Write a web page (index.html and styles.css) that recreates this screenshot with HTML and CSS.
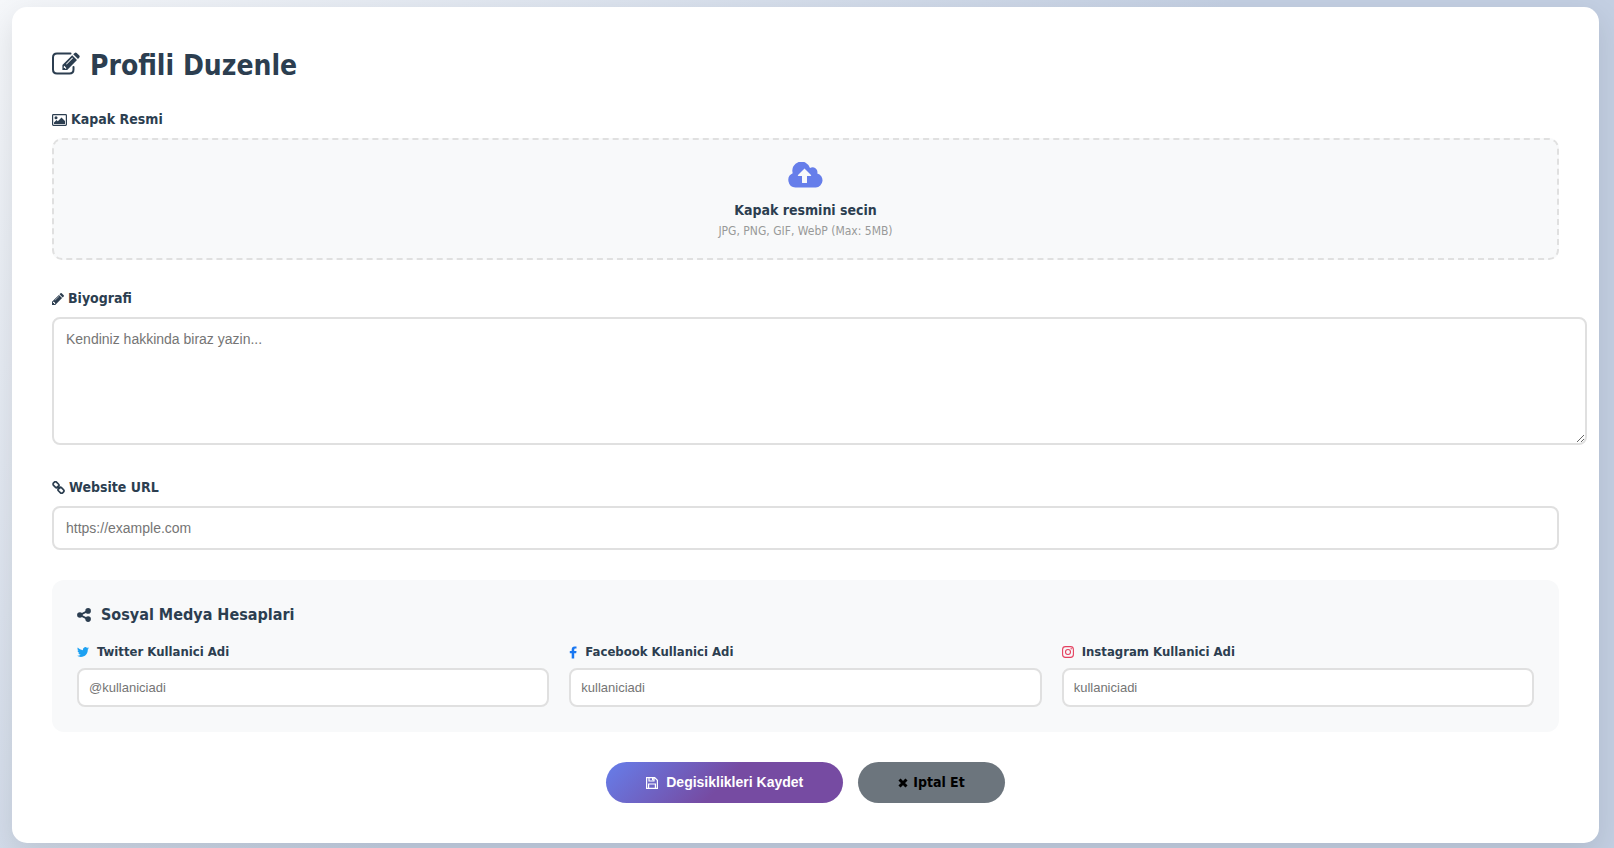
FILE: index.html
```html
<!DOCTYPE html>
<html lang="tr">
    <head>
        <meta charset="UTF-8" />
        <meta name="viewport" content="width=device-width, initial-scale=1.0" />
        <title>Profili Duzenle</title>

        <link rel="stylesheet" href="styles.css">
    </head>
    <body>
        <main class="edit-card">
            <h1>
                <svg class="icon-title" viewBox="0 0 28 28" aria-hidden="true">
                    <path d="M18.500 1.500H5Q1 1.500 1 5.500V17.500Q1 21.500 5 21.500H17.500Q21.500 21.500 21.500 17.500V15" fill="none" stroke="currentColor" stroke-width="2" stroke-linecap="round" />
                    <path fill="currentColor" fill-rule="evenodd" d="M20.200 3.200L25 8L15.200 17.900H10.400V13zM12.400 13.800L11.800 14.400V15.900H13.200V17H13.600L14.400 16.200zM20.300 5.600L14 11.900L14.600 12.500L20.900 6.200zM21.200 2.200L22.700 .9Q23.700 .1 24.700 .9L27.300 3.500Q28.100 4.500 27.300 5.500L26 7z" />
                </svg>
                Profili Duzenle
            </h1>

            <form action="javascript:void(0)">
                <div class="form-group">
                    <label for="cover">
                        <svg class="icon-image" viewBox="0 0 15 12" aria-hidden="true">
                            <rect x=".6" y=".6" width="13.800" height="10.800" rx=".8" fill="none" stroke="currentColor" stroke-width="1.200" />
                            <circle cx="4" cy="3.700" r="1.500" fill="currentColor" />
                            <path d="M2 10V8.500L4.500 6L5.800 7.200L9.500 3.400L13 7V10z" fill="currentColor" />
                        </svg>
                        Kapak Resmi
                    </label>
                    <label class="upload-area" for="cover">
                        <svg class="icon-cloud" viewBox="0 0 35 26" aria-hidden="true">
                            <path fill="currentColor" fill-rule="evenodd" d="M7.500 25.500A7.500 7.500 0 0 1 4.700 11.200A9 9 0 0 1 22 6A4.900 4.900 0 0 1 29.300 11.400A7.200 7.200 0 0 1 27.800 25.500zM16.500 6.600L10 13.100Q9.500 13.900 10.400 13.900H14V20.400Q14 21 14.600 21H18.400Q19 21 19 20.400V13.900H22.600Q23.500 13.900 23 13.100z" />
                        </svg>
                        <span class="upload-text">Kapak resmini secin</span>
                        <span class="upload-hint">JPG, PNG, GIF, WebP (Max: 5MB)</span>
                    </label>
                    <input type="file" id="cover" accept="image/*" />
                </div>

                <div class="form-group">
                    <label for="bio">
                        <svg class="icon-pencil" viewBox="0 0 12 12" aria-hidden="true">
                            <path fill="currentColor" fill-rule="evenodd" d="M0 12V8.800L6.900 1.900L10.100 5.100L3.200 12zM1 9.300V10H2V11H2.700L3.400 10.300L1.700 8.600zM6.800 3.200L2.700 7.300L3 7.600L7.100 3.500zM7.500 1.300L8.500 .3Q9.100-.2 9.700 .3L11.700 2.300Q12.200 2.900 11.700 3.500L10.700 4.500z" />
                        </svg>
                        Biyografi
                    </label>
                    <textarea id="bio" placeholder="Kendiniz hakkinda biraz yazin..."></textarea>
                </div>

                <div class="form-group">
                    <label for="website">
                        <svg class="icon-link" viewBox="0 0 13 13" aria-hidden="true">
                            <g fill="none" stroke="currentColor" stroke-width="1.700">
                                <rect x="1" y="1.500" width="6" height="4.400" rx="1.800" transform="rotate(45 4 3.700)" />
                                <rect x="6" y="7.100" width="6" height="4.400" rx="1.800" transform="rotate(45 9 9.300)" />
                                <path d="M5 5L8 8" />
                            </g>
                        </svg>
                        Website URL
                    </label>
                    <input type="url" id="website" placeholder="https://example.com" />
                </div>

                <section class="social">
                    <h2>
                        <svg class="icon-share" viewBox="0 0 14 14" aria-hidden="true">
                            <path d="M11 2.900L3 7L11 11.100" fill="none" stroke="currentColor" stroke-width="1.800" />
                            <g fill="currentColor">
                                <circle cx="11.100" cy="2.900" r="2.800" />
                                <circle cx="2.900" cy="7" r="2.800" />
                                <circle cx="11.100" cy="11.100" r="2.800" />
                            </g>
                        </svg>
                        Sosyal Medya Hesaplari
                    </h2>
                    <div class="social-grid">
                        <div class="social-item">
                            <label for="twitter">
                                <svg class="icon-social twitter" viewBox="0 0 24 24" aria-hidden="true">
                                    <path fill="currentColor" d="M23.950 4.570a10 10 0 0 1-2.820.780 4.960 4.960 0 0 0 2.160-2.720c-.950.550-2 .950-3.130 1.180a4.920 4.920 0 0 0-8.380 4.480C7.690 8.100 4.070 6.130 1.640 3.160a4.820 4.820 0 0 0-.670 2.480c0 1.710.870 3.210 2.190 4.100a4.900 4.900 0 0 1-2.230-.620v.060a4.920 4.920 0 0 0 3.950 4.830 5 5 0 0 1-2.210.080 4.940 4.940 0 0 0 4.600 3.420A9.870 9.870 0 0 1 0 19.540a14 14 0 0 0 7.550 2.210c9.050 0 14-7.500 14-13.980 0-.210 0-.420-.020-.630a9.940 9.940 0 0 0 2.420-2.570z" />
                                </svg>
                                Twitter Kullanici Adi
                            </label>
                            <input type="text" id="twitter" placeholder="@kullaniciadi" />
                        </div>
                        <div class="social-item">
                            <label for="facebook">
                                <svg class="icon-facebook" viewBox="0 0 8 13" aria-hidden="true">
                                    <path fill="currentColor" d="M7.500 .5V2.600H6.300Q5.200 2.600 5.200 3.700V5H7.500L7.200 7.200H5.200V12.600H2.700V7.200H.8V5H2.700V3.300Q2.700 .4 5.700 .4Q6.800 .4 7.500 .5z" />
                                </svg>
                                Facebook Kullanici Adi
                            </label>
                            <input type="text" id="facebook" placeholder="kullaniciadi" />
                        </div>
                        <div class="social-item">
                            <label for="instagram">
                                <svg class="icon-social instagram" viewBox="0 0 12 12" aria-hidden="true">
                                    <g fill="none" stroke="currentColor">
                                        <rect x=".6" y=".6" width="10.800" height="10.800" rx="2.900" stroke-width="1.100" />
                                        <circle cx="6" cy="6" r="2.500" stroke-width="1.100" />
                                    </g>
                                    <circle cx="9.200" cy="2.800" r=".7" fill="currentColor" />
                                </svg>
                                Instagram Kullanici Adi
                            </label>
                            <input type="text" id="instagram" placeholder="kullaniciadi" />
                        </div>
                    </div>
                </section>

                <div class="actions">
                    <button type="submit" class="btn save">
                        <svg class="icon-save" viewBox="0 0 12 12" aria-hidden="true">
                            <path d="M.6 .6H8.700L11.400 3.300V11.400H.6zM3 .6V4H8V.6M2.600 11.400V7H9.400V11.400" fill="none" stroke="currentColor" stroke-width="1.200" />
                            <path d="M6 1H7.500V3.200H6z" fill="currentColor" />
                        </svg>
                        Degisiklikleri Kaydet
                    </button>
                    <a href="#" class="btn cancel">
                        <svg class="icon-times" viewBox="0 0 10 10" aria-hidden="true">
                            <path d="M1.500 1.500L8.500 8.500M8.500 1.500L1.500 8.500" stroke="currentColor" stroke-width="3" />
                        </svg>
                        Iptal Et
                    </a>
                </div>
            </form>
        </main>
    </body>
</html>
```
FILE: styles.css
```css
body {
    margin: 0;
    padding: 7px 15px 5px 12px;
    font-family: "DejaVu Sans Condensed", "DejaVu Sans", sans-serif;
    font-stretch: condensed;
    color: #2c3e50;
    background: linear-gradient(135deg, #f5f7fa 0%, #c3cfe2 50%);
}
svg {
    flex-shrink: 0;
}
.edit-card {
    padding: 40px;
    background: white;
    border-radius: 15px;
    box-shadow: 0 10px 30px rgba(0, 0, 0, 0.1);
}
h1 {
    display: flex;
    align-items: center;
    gap: 10px;
    margin: 0 0 27px;
    font-size: 28px;
    line-height: 37px;
}
label {
    display: flex;
    align-items: center;
    gap: 4px;
    margin-bottom: 10px;
    font-size: 14px;
    line-height: 17px;
    font-weight: bold;
}
.form-group {
    margin-bottom: 30px;
}
#cover {
    display: none;
}
.upload-area {
    flex-direction: column;
    gap: 0;
    margin: 0;
    padding: 22px 20px 18px;
    border: 2px dashed #e0e0e0;
    border-radius: 10px;
    background: #f8f9fa;
    cursor: pointer;
}
.upload-text {
    margin-top: 14px;
}
.upload-hint {
    margin-top: 4px;
    font-size: 12px;
    line-height: 17px;
    font-weight: normal;
    color: #999;
}
input,
textarea {
    display: block;
    box-sizing: border-box;
    width: 100%;
    padding: 12px;
    border: 2px solid #e0e0e0;
    border-radius: 8px;
    background: white;
    font-family: "Liberation Sans", Arial, sans-serif;
    font-size: 14px;
    line-height: 16px;
}
/* textarea keeps its padding and border outside the width */
textarea {
    box-sizing: content-box;
    height: 100px;
    margin-bottom: 34px;
    resize: vertical;
}
.social {
    margin-bottom: 30px;
    padding: 25px;
    border-radius: 12px;
    background: #f8f9fa;
}
h2 {
    display: flex;
    align-items: center;
    gap: 10px;
    margin: 0 0 18px;
    font-size: 16px;
    line-height: 20px;
}
.social-grid {
    display: grid;
    grid-template-columns: repeat(3, 1fr);
    gap: 20px;
}
.social-item label {
    gap: 8px;
    margin-bottom: 7px;
    font-size: 13px;
    line-height: 18px;
}
.social-item input {
    padding: 10px;
    font-size: 13px;
    line-height: 15px;
}
.actions {
    display: flex;
    justify-content: center;
    gap: 15px;
}
.btn {
    display: flex;
    align-items: center;
    padding: 12px 40px;
    border: none;
    border-radius: 25px;
    font-size: 14px;
    line-height: 17px;
    font-weight: bold;
    text-decoration: none;
    cursor: pointer;
}
.save {
    gap: 8px;
    font-family: "Liberation Sans", Arial, sans-serif;
    color: white;
    background: linear-gradient(135deg, #667eea 0%, #764ba2 50%);
}
.cancel {
    gap: 5px;
    color: black;
    background: #6c757d;
}
.icon-title {
    width: 28px;
    height: 28px;
}
.icon-image {
    width: 15px;
    height: 12px;
}
.icon-cloud {
    width: 35px;
    height: 26px;
    color: #667eea;
}
.icon-pencil,
.icon-social {
    width: 12px;
    height: 12px;
}
.icon-link {
    width: 13px;
    height: 13px;
}
.icon-share {
    width: 14px;
    height: 14px;
}
.icon-facebook {
    width: 8px;
    height: 13px;
    color: #1877f2;
}
.icon-save {
    width: 12px;
    height: 12px;
}
.icon-times {
    width: 10px;
    height: 10px;
}
.twitter {
    color: #1da1f2;
}
.instagram {
    color: #e4405f;
}
```
